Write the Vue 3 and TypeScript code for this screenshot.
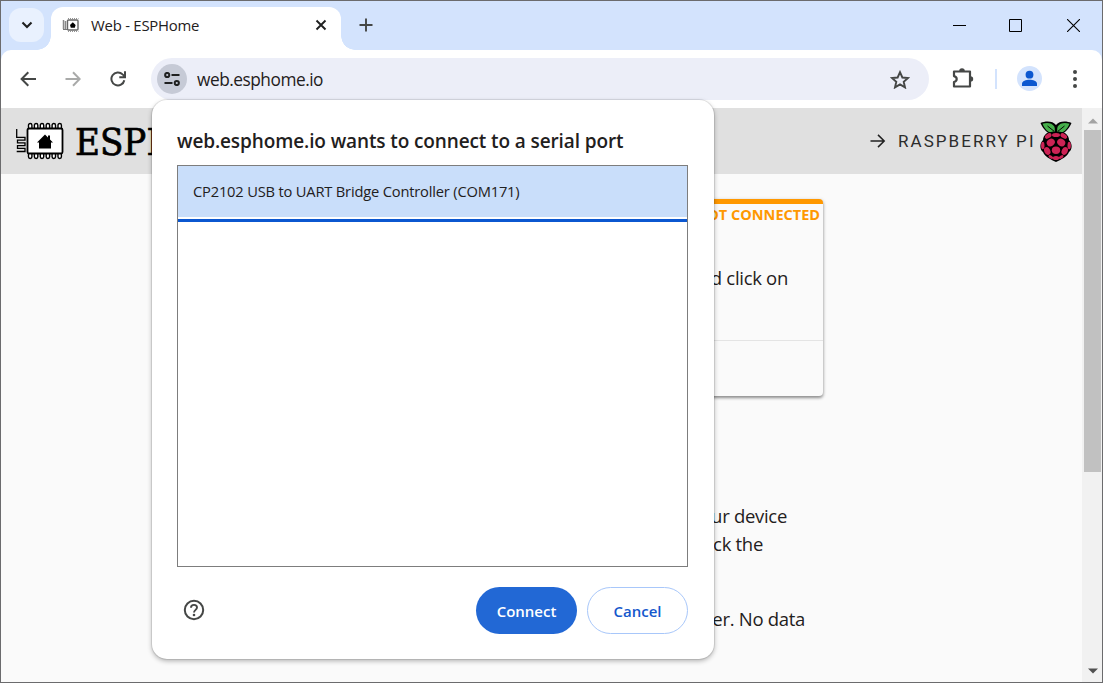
<script setup lang="ts">
import { ref } from 'vue'

interface Port {
  id: number
  label: string
}

const ports: Port[] = [{ id: 171, label: 'CP2102 USB to UART Bridge Controller (COM171)' }]
const selected = ref<number>(171)

const pins: number[] = [0, 1, 2, 3, 4, 5]
</script>

<template>
  <div class="window">
    <header class="tabstrip">
      <button class="tab-search" aria-label="Search tabs">
        <svg width="12" height="8" viewBox="0 0 12 8"><path d="M1.500 1.500 6 6l4.500-4.500" fill="none" stroke="#1f2020" stroke-width="2.100" /></svg>
      </button>
      <div class="tab">
        <svg class="favicon" width="18" height="16" viewBox="0 0 18 16">
          <path d="M1.500 3v9M3.500 4v9" stroke="#888" stroke-width="1.500" fill="none" />
          <path d="M1 12.500h4" stroke="#777" fill="none" />
          <rect x="5.500" y="3" width="10.500" height="10" rx="1" fill="#fff" stroke="#666" stroke-width="1.400" />
          <path d="M6 1.600h10.500M6 14.400h10.500" stroke="#888" stroke-width="1" stroke-dasharray="1 1" />
          <path d="M8 8 10.800 5.300 13.600 8 12.800 10.700h-4z" fill="#000" />
        </svg>
        <span class="tab-title">Web - ESPHome</span>
        <svg class="tab-close" width="12" height="12" viewBox="0 0 12 12"><path d="m1.500 1.500 9 9m0-9-9 9" stroke="#1f2020" stroke-width="1.900" /></svg>
      </div>
      <svg class="new-tab" width="14" height="14" viewBox="0 0 14 14"><path d="M7 .5v13M.5 7h13" stroke="#454746" stroke-width="1.900" /></svg>
      <div class="controls">
        <svg width="13" height="13" viewBox="0 0 13 13"><path d="M0 6.500h13" stroke="#000" /></svg>
        <svg width="13" height="13" viewBox="0 0 13 13"><path d="M.5.5h12v12H.5z" fill="none" stroke="#000" /></svg>
        <svg width="13" height="13" viewBox="0 0 13 13"><path d="m0 0 13 13M13 0 0 13" stroke="#000" stroke-width="1.100" /></svg>
      </div>
    </header>

    <nav class="toolbar">
      <svg class="nav-icon" width="16" height="16" viewBox="0 0 16 16"><path d="M16 8H2M8.300 1.300 1.600 8l6.700 6.700" fill="none" stroke="#454746" stroke-width="2" /></svg>
      <svg class="nav-icon" width="16" height="16" viewBox="0 0 16 16"><path d="M.5 8H14M8 1.300 14.700 8 8 14.700" fill="none" stroke="#a9aaa9" stroke-width="2" /></svg>
      <svg class="nav-icon" width="16" height="16" viewBox="0 0 16 16"><path d="M14.300 9.200A6.500 6.500 0 1 1 12.600 3.400L14.800 5.500M15 .3v6H9.300" fill="none" stroke="#454746" stroke-width="2" /></svg>
      <div class="omnibox">
        <span class="site-info">
          <svg width="16" height="14" viewBox="0 0 16 14" fill="none" stroke="#1f2020" stroke-width="2">
            <circle cx="3.200" cy="3" r="2.100" /><path d="M7.500 3h8" />
            <circle cx="12.800" cy="11" r="2.100" /><path d="M.5 11h8" />
          </svg>
        </span>
        <span class="url">web.esphome.io</span>
        <svg class="star" width="20" height="19" viewBox="0 0 20 19"><path d="m10 2.200 2.350 5.300 5.650.5-4.300 3.800 1.300 5.600L10 14.400l-5 3 1.300-5.600L2 8l5.650-.5z" fill="none" stroke="#454746" stroke-width="1.900" /></svg>
      </div>
      <svg class="puzzle" width="22" height="22" viewBox="0 0 22 22">
        <path d="M2 4.500h16v15H2v-4.500c3.600-.8 3.600-5.100 0-5.900z" fill="none" stroke="#454746" stroke-width="2.200" stroke-linejoin="round" />
        <path d="M7.200 4a2.800 2.800 0 0 1 5.600 0zM18.500 9.200a2.700 2.700 0 0 1 0 5.400z" fill="#454746" />
      </svg>
      <span class="divider"></span>
      <svg class="avatar" width="25" height="25" viewBox="0 0 25 25">
        <circle cx="12.500" cy="12.500" r="12.500" fill="#d3e3fd" />
        <circle cx="12.500" cy="8.700" r="3.900" fill="#0b57d0" />
        <path d="M5 20v-2.200c0-2.700 4-4 7.500-4s7.500 1.300 7.500 4V20z" fill="#0b57d0" />
      </svg>
      <svg class="kebab" width="4" height="18" viewBox="0 0 4 18" fill="#454746"><circle cx="2" cy="2" r="2" /><circle cx="2" cy="9" r="2" /><circle cx="2" cy="16" r="2" /></svg>
    </nav>

    <div class="viewport">
      <main class="page">
        <div class="site-header">
          <svg class="chip" width="49" height="38" viewBox="0 0 49 38">
            <g fill="#fff" stroke="#000" stroke-width="1.400">
              <rect v-for="p in pins" :key="'t' + p" :x="13.500 + p * 5.900" y="1.500" width="3.400" height="8" rx="1.700" />
              <rect v-for="p in pins" :key="'b' + p" :x="13.500 + p * 5.900" y="28.500" width="3.400" height="8" rx="1.700" />
            </g>
            <rect x="12.500" y="6.500" width="35" height="25" rx="1.500" fill="#fff" stroke="#000" stroke-width="1.800" />
            <path d="M1.700 7v8.300h8.300v2.900H2.500v2.700H10v2.700H2.500v2.700H10v3.200H1.700" fill="none" stroke="#000" stroke-width="1.300" />
            <path d="M22 20.500 30 12.500l3 3v-2h2v4l3 3h-2v6H24v-6z" fill="#000" />
          </svg>
          <span class="brand">ESPH</span>
          <div class="pi-link">
            <svg width="16" height="14" viewBox="0 0 16 14"><path d="M.5 7H14M8 .9 14.200 7 8 13.100" fill="none" stroke="#212121" stroke-width="1.500" /></svg>
            <span>RASPBERRY PI</span>
            <svg class="berry" width="32" height="41" viewBox="0 0 32 41">
              <path d="M16 13C10 15 4 10 .5 2 6-.5 13 0 16 4c3-4 10-4.500 15.500-2-3.500 8-9.500 13-15.500 11z" fill="#000" />
              <path d="M14.800 12C9 13 5 8.500 2.500 2.700 7.500 1.200 12 2 14.300 5.500l.5 2zM17.200 12C23 13 27 8.500 29.500 2.700c-5-1.500-9.500-.7-11.800 2.800l-.5 2z" fill="#46af4b" />
              <path d="m7.500 5 6.500 5.200M24.500 5 18 10.200" stroke="#000" stroke-width="1" fill="none" />
              <path d="M7 12c4-2 14-2 18 0 3 2 4 5 4 7 4 4 3 10 0 12-2 5-7 7-13 10C10 38 5 36 3 31c-3-2-4-8 0-12 0-2 1-5 4-7z" fill="#000" />
              <g fill="#cd2355">
                <ellipse cx="16" cy="14" rx="4" ry="2" />
                <ellipse cx="8.200" cy="15" rx="3.700" ry="2.200" transform="rotate(-35 8.200 15)" />
                <ellipse cx="23.800" cy="15" rx="3.700" ry="2.200" transform="rotate(35 23.800 15)" />
                <ellipse cx="10.800" cy="21.500" rx="4.200" ry="3.600" transform="rotate(-35 10.800 21.500)" />
                <ellipse cx="21.200" cy="21.500" rx="4.200" ry="3.600" transform="rotate(35 21.200 21.500)" />
                <ellipse cx="2.800" cy="24.500" rx="1.700" ry="3.800" />
                <ellipse cx="29.200" cy="24.500" rx="1.700" ry="3.800" />
                <ellipse cx="16" cy="29.300" rx="4.200" ry="3.700" />
                <ellipse cx="7.300" cy="30" rx="3" ry="4" transform="rotate(-25 7.300 30)" />
                <ellipse cx="24.700" cy="30" rx="3" ry="4" transform="rotate(25 24.700 30)" />
                <ellipse cx="10.800" cy="36" rx="2.600" ry="1.400" transform="rotate(30 10.800 36)" />
                <ellipse cx="21.200" cy="36" rx="2.600" ry="1.400" transform="rotate(-30 21.200 36)" />
                <ellipse cx="16" cy="37" rx="3.200" ry="2" />
              </g>
            </svg>
          </div>
        </div>
        <section class="card">
          <div class="status">NOT CONNECTED</div>
          <p class="card-text">and click on</p>
          <div class="card-actions"></div>
        </section>
        <div class="copy">
          <p class="line device">your device</p>
          <p class="line click">Click the</p>
          <p class="line data">browser. No data</p>
        </div>
      </main>
      <aside class="scrollbar">
        <svg width="10" height="6" viewBox="0 0 10 6"><path d="M0 5.500 5 .5l5 5z" fill="#a3a3a3" /></svg>
        <div class="thumb"></div>
        <svg class="down" width="10" height="6" viewBox="0 0 10 6"><path d="M0 .5 5 5.500l5-5z" fill="#505050" /></svg>
      </aside>
    </div>

    <div class="dialog" role="dialog">
      <h1>web.esphome.io wants to connect to a serial port</h1>
      <div class="ports">
        <div
          v-for="port in ports"
          :key="port.id"
          class="port"
          :class="{ selected: selected === port.id }"
          @click="selected = port.id"
        >
          <span>{{ port.label }}</span>
        </div>
      </div>
      <footer>
        <svg class="help" width="22" height="22" viewBox="0 0 22 22">
          <circle cx="11" cy="11" r="9.200" fill="none" stroke="#454746" stroke-width="2" />
          <path d="M8 8.700c0-1.700 1.300-2.800 3-2.800s3 1.100 3 2.700c0 2.200-3 2.400-3 4.900" fill="none" stroke="#454746" stroke-width="1.900" />
          <circle cx="11" cy="16" r="1.300" fill="#454746" />
        </svg>
        <button class="connect">Connect</button>
        <button class="cancel">Cancel</button>
      </footer>
    </div>
  </div>
</template>

<style>
body {
  overflow: hidden;
}
</style>

<style scoped>
* {
  box-sizing: border-box;
}
svg {
  display: block;
  flex: none;
}
button {
  font: inherit;
  padding: 0;
  border: 0;
}
.window {
  position: relative;
  display: flex;
  flex-direction: column;
  width: 1103px;
  height: 683px;
  border: 1px solid #6b6b6d;
  background: #d3e3fd;
  font-family: 'Open Sans', 'Noto Sans', sans-serif;
  color: #1f2020;
  overflow: hidden;
}
.tabstrip {
  display: flex;
  height: 49px;
  flex: none;
  align-items: flex-start;
}
.tab-search {
  display: flex;
  align-items: center;
  justify-content: center;
  width: 35px;
  height: 34px;
  margin: 7px 0 0 8px;
  border-radius: 12px;
  background: #e9f1fe;
}
.tab {
  position: relative;
  display: flex;
  align-items: center;
  width: 290px;
  height: 43px;
  margin: 6px 0 0 7px;
  padding: 0 14px 7px 11px;
  border-radius: 12px 12px 0 0;
  background: #fff;
}
.tab::before,
.tab::after {
  content: '';
  position: absolute;
  bottom: 0;
  width: 14px;
  height: 14px;
}
.tab::before {
  left: -14px;
  background: radial-gradient(circle at 0 0, transparent 13.500px, #fff 14px);
}
.tab::after {
  right: -14px;
  background: radial-gradient(circle at 100% 0, transparent 13.500px, #fff 14px);
}
.tab-title {
  margin-left: 11px;
  font-size: 14.900px;
  letter-spacing: -0.230px;
  white-space: nowrap;
}
.tab-close {
  margin-left: auto;
}
.new-tab {
  margin: 17px 0 0 18px;
}
.controls {
  display: flex;
  gap: 44px;
  margin: 18px 22px 0 auto;
}
.controls svg:first-child {
  margin-right: -1px;
}
.controls svg:last-child {
  margin-left: 1px;
}
.toolbar {
  display: flex;
  align-items: center;
  flex: none;
  height: 58px;
  padding-left: 19px;
  border-radius: 10px 10px 0 0;
  background: #fff;
}
.nav-icon {
  margin-right: 29px;
}
.nav-icon:nth-child(3) {
  margin-right: 25px;
}
.omnibox {
  display: flex;
  align-items: center;
  width: 778px;
  height: 42px;
  padding: 0 19px 0 6px;
  border-radius: 21px;
  background: #eceef8;
}
.site-info {
  display: flex;
  align-items: center;
  justify-content: center;
  width: 30px;
  height: 30px;
  border-radius: 50%;
  background: #c6cad6;
}
.url {
  margin-left: 10px;
  font-size: 17.300px;
  letter-spacing: -0.480px;
}
.star {
  margin-left: auto;
}
.puzzle {
  margin: -2px 0 0 23px;
}
.divider {
  width: 2px;
  height: 20px;
  margin-left: 21px;
  background: #d3e3fd;
}
.avatar {
  margin: -1px 0 0 20px;
}
.kebab {
  margin-left: 31px;
}
.viewport {
  display: flex;
  flex: 1;
  min-height: 0;
}
.page {
  flex: 1;
  background: #fafafa;
  overflow: hidden;
}
.site-header {
  display: flex;
  align-items: center;
  height: 66px;
  padding: 0 10px 0 14px;
  background: #e0e0e0;
}
.brand {
  margin: 1px 0 0 11px;
  font-family: 'DejaVu Serif Condensed', 'DejaVu Serif', serif;
  font-stretch: condensed;
  font-size: 38px;
  line-height: 48px;
  color: #000;
  -webkit-text-stroke: 0.700px #000;
}
.pi-link {
  display: flex;
  align-items: center;
  margin-left: auto;
  font-family: Roboto, 'Liberation Sans', sans-serif;
  font-size: 17px;
  letter-spacing: 2.050px;
  white-space: nowrap;
  color: #2c2c2c;
}
.pi-link span {
  width: 138px;
  margin-left: 12px;
}
.berry {
  margin-left: 4px;
}
.card {
  width: 563px;
  height: 197px;
  margin: 25px 0 0 259px;
  border-top: 5px solid #ff9800;
  border-radius: 4px;
  background: #fafafa;
  box-shadow: 0 2px 3px rgba(0, 0, 0, 0.35), 0 1px 4px rgba(0, 0, 0, 0.18);
  text-align: right;
}
.status {
  padding-right: 3px;
  font-size: 14.500px;
  font-weight: 700;
  line-height: 22px;
  color: #ff9800;
}
.card-text {
  margin: 38px 35px 0 0;
  font-size: 18.500px;
  letter-spacing: -0.300px;
  line-height: 28px;
}
.card-actions {
  margin-top: 48px;
  border-top: 1px solid #e4e4e4;
}
.copy {
  display: flex;
  flex-direction: column;
  width: 822px;
  padding-top: 106px;
  text-align: right;
}
.line {
  margin: 0;
  font-size: 18.500px;
  letter-spacing: -0.300px;
  line-height: 28px;
}
.device {
  padding-right: 36px;
}
.click {
  padding-right: 60px;
}
.data {
  margin-top: 47px;
  padding-right: 18px;
}
.scrollbar {
  display: flex;
  flex-direction: column;
  align-items: center;
  width: 20px;
  padding: 10px 0 8px 1px;
  background: #f1f1f1;
}
.thumb {
  width: 17px;
  height: 342px;
  margin-top: 6px;
  background: #c1c1c1;
}
.down {
  margin-top: auto;
}
.dialog {
  position: absolute;
  left: 151px;
  top: 99px;
  width: 562px;
  height: 559px;
  padding: 28px 26px 25px 25px;
  border-radius: 15px;
  background: #fff;
  box-shadow: 0 0 0 1px rgba(0, 0, 0, 0.08), 0 2px 5px rgba(0, 0, 0, 0.3);
}
h1 {
  margin: 0;
  font-size: 19px;
  font-weight: 550;
  letter-spacing: -0.110px;
  line-height: 26px;
  white-space: nowrap;
}
.ports {
  height: 402px;
  margin-top: 11px;
  border: 1px solid #7d7d7d;
}
.port {
  display: flex;
  align-items: center;
  height: 51px;
  padding: 0 0 2px 15px;
  font-size: 14.700px;
  letter-spacing: -0.190px;
  white-space: nowrap;
}
.port.selected {
  background: #c9defa;
  box-shadow: 0 2px #fff, 0 5px #0b57d0;
}
footer {
  display: flex;
  align-items: center;
  height: 47px;
  margin-top: 20px;
  padding-left: 6px;
  font-size: 15px;
  font-weight: 600;
}
.help {
  margin-top: -1px;
}
.connect,
.cancel {
  width: 101px;
  height: 47px;
  border-radius: 24px;
}
.connect {
  margin-left: auto;
  background: #2268d5;
  color: #fff;
}
.cancel {
  margin-left: 10px;
  border: 1px solid #a8c7fa;
  background: #fff;
  color: #1558cc;
}
</style>
